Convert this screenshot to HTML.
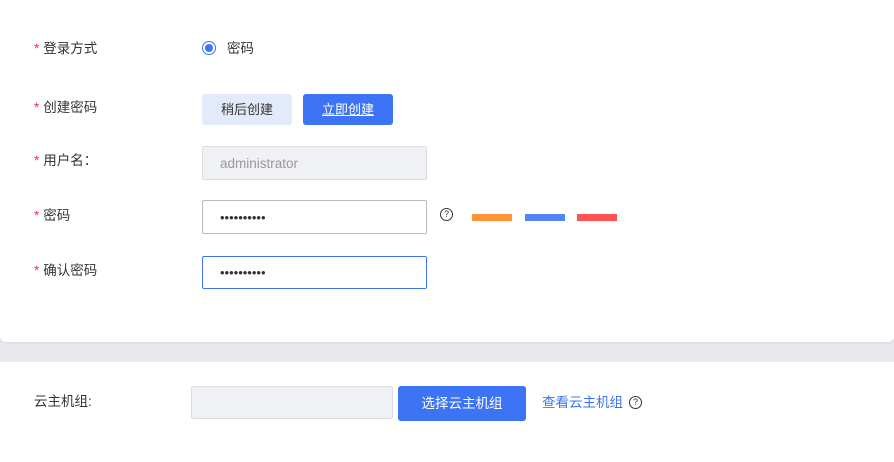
<!DOCTYPE html>
<html><head><meta charset="utf-8"><style>
body{margin:0;width:894px;height:462px;background:#e8e9ed;font-family:"Liberation Sans","Noto Sans CJK SC",sans-serif;font-size:13px;color:#333;position:relative;overflow:hidden}
.a{position:absolute}
.card1{left:0;top:0;width:894px;height:342px;background:#fff;border-radius:0 0 6px 6px;box-shadow:0 1px 3px rgba(0,0,0,.08)}
.card2{left:0;top:362px;width:894px;height:100px;background:#fff}
.lab{left:34px;line-height:16px;font-size:13.5px}
.lab b{color:#f0334f;font-weight:normal;margin-right:4px}
.inp{box-sizing:border-box;border:1px solid #b9bac0;border-radius:2px;background:#fff;width:225px;padding-left:17px;display:flex;align-items:center}
.dots{font-size:13px;letter-spacing:0;color:#333}
.q{width:11px;height:11px;border:1px solid #333;border-radius:50%;font-size:9px;line-height:11px;text-align:center;color:#333}
</style></head><body>
<div class="a card1"></div>
<div class="a card2"></div>
<div class="a lab" style="top:41px"><b>*</b>登录方式</div>
<div class="a" style="left:202px;top:41px;width:12px;height:12px;border:1px solid #3d74f5;border-radius:50%"></div>
<div class="a" style="left:205px;top:44px;width:8px;height:8px;background:#3d74f5;border-radius:50%;box-shadow:inset 0 0 0 0 #fff"></div>
<div class="a" style="left:227px;top:41px;line-height:16px;font-size:13.5px">密码</div>
<div class="a lab" style="top:100px"><b>*</b>创建密码</div>
<div class="a" style="left:202px;top:94px;width:90px;height:31px;background:#e3eaf9;border-radius:3px;text-align:center;line-height:31px">稍后创建</div>
<div class="a" style="left:303px;top:94px;width:90px;height:31px;background:#3d74f5;border-radius:3px;text-align:center;line-height:31px;color:#fff;text-decoration:underline">立即创建</div>
<div class="a lab" style="top:153px"><b>*</b>用户名：</div>
<div class="a inp" style="left:202px;top:146px;height:34px;background:#f0f1f5;border-color:#dcdde2;color:#999;font-size:13.5px">administrator</div>
<div class="a lab" style="top:208px"><b>*</b>密码</div>
<div class="a inp dots" style="left:202px;top:200px;height:34px">••••••••••</div>
<div class="a q" style="left:440px;top:208px">?</div>
<div class="a" style="left:472px;top:214px;width:40px;height:7px;background:#ff9335"></div>
<div class="a" style="left:525px;top:214px;width:40px;height:7px;background:#5386f5"></div>
<div class="a" style="left:577px;top:214px;width:40px;height:7px;background:#ff5252"></div>
<div class="a lab" style="top:263px"><b>*</b>确认密码</div>
<div class="a inp dots" style="left:202px;top:256px;height:33px;border-color:#3d74f5">••••••••••</div>
<div class="a lab" style="top:394px">云主机组:</div>
<div class="a" style="left:191px;top:386px;width:202px;height:33px;box-sizing:border-box;background:#f0f1f5;border:1px solid #dcdde2;border-radius:2px"></div>
<div class="a" style="left:398px;top:386px;width:128px;height:35px;background:#3d74f5;border-radius:3px;color:#fff;text-align:center;line-height:35px;font-size:13.5px">选择云主机组</div>
<div class="a" style="left:542px;top:395px;line-height:16px;color:#3d74f5;font-size:13.5px">查看云主机组</div>
<div class="a q" style="left:629px;top:396px">?</div>
</body></html>
